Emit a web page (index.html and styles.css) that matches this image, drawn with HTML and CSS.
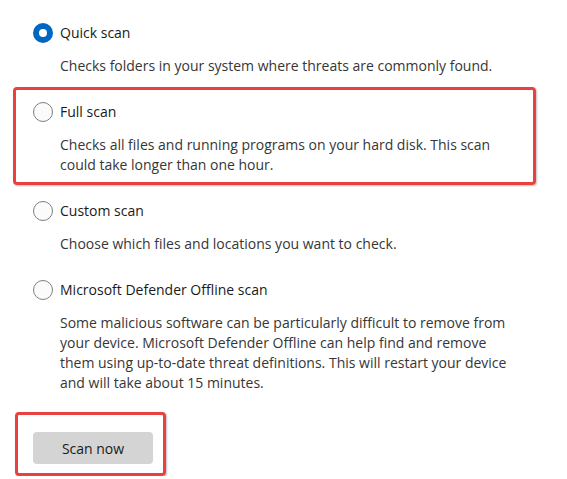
FILE: index.html
```html
<!DOCTYPE html>
<html lang="en">
<head>
    <meta charset="UTF-8">
    <meta name="viewport" content="width=device-width, initial-scale=1.0">
    <title>Scan options</title>
    <link rel="stylesheet" href="styles.css">
</head>
<body>
    <div class="scan-options">
        <label class="option">
            <span class="option-head">
                <input type="radio" name="scan" checked>
                <span class="title">Quick scan</span>
            </span>
            <span class="desc">Checks folders in your system where threats are commonly found.</span>
        </label>

        <!-- highlighted option -->
        <label class="option marked">
            <span class="option-head">
                <input type="radio" name="scan">
                <span class="title">Full scan</span>
            </span>
            <span class="desc">Checks all files and running programs on your hard disk. This scan could take longer than one hour.</span>
        </label>

        <label class="option">
            <span class="option-head">
                <input type="radio" name="scan">
                <span class="title">Custom scan</span>
            </span>
            <span class="desc">Choose which files and locations you want to check.</span>
        </label>

        <label class="option">
            <span class="option-head">
                <input type="radio" name="scan">
                <span class="title">Microsoft Defender Offline scan</span>
            </span>
            <span class="desc">Some malicious software can be particularly difficult to remove from your device. Microsoft Defender Offline can help find and remove them using up-to-date threat definitions. This will restart your device and will take about 15 minutes.</span>
        </label>

        <div class="scan-box">
            <button class="scan-btn">Scan now</button>
        </div>
    </div>
</body>
</html>
```

FILE: styles.css
```css
body{
    margin: 0;
    background: #ffffff;
    font-family: "Open Sans", "Noto Sans", sans-serif;
    font-size: 14px;
    color: #1a1a1a;
}

.scan-options{
    display: flex;
    flex-direction: column;
    padding: 23px 54px 0 33px;
}

.option{
    display: flex;
    flex-direction: column;
    margin-bottom: 26px;
}

.option-head{
    display: flex;
    align-items: center;
    height: 20px;
    gap: 7px;
}

.title{
    line-height: 20px;
}

.desc{
    margin-top: 13px;
    padding-left: 27px;
    line-height: 20px;
    color: #363636;
}

/* red highlight box */
.marked{
    margin: -15px -23px 16px -20px;
    padding: 12px 20px 7px 17px;
    border: 3px solid #e8413f;
    border-radius: 4px;
    box-shadow: 1px 1px 2px rgba(0, 0, 0, 0.25);
}

input[type="radio"]{
    appearance: none;
    -webkit-appearance: none;
    margin: 0;
    width: 20px;
    height: 20px;
    border: 1px solid #7f7f7f;
    border-radius: 50%;
    background: #fbfbfb;
    display: flex;
    align-items: center;
    justify-content: center;
}

input[type="radio"]:checked{
    border: none;
    background: #0067c0;
}

input[type="radio"]:checked::after{
    content: "";
    width: 8px;
    height: 8px;
    border-radius: 50%;
    background: #ffffff;
}

.scan-box{
    align-self: flex-start;
    margin: -7px 0 0 -18px;
    padding: 17px 10px 9px 15px;
    border: 3px solid #e8413f;
    border-radius: 4px;
    box-shadow: 1px 1px 2px rgba(0, 0, 0, 0.25);
}

.scan-btn{
    width: 120px;
    height: 32px;
    border: none;
    border-radius: 4px;
    background: #d4d4d4;
    color: #1a1a1a;
    font-family: inherit;
    font-size: 14px;
}
```
